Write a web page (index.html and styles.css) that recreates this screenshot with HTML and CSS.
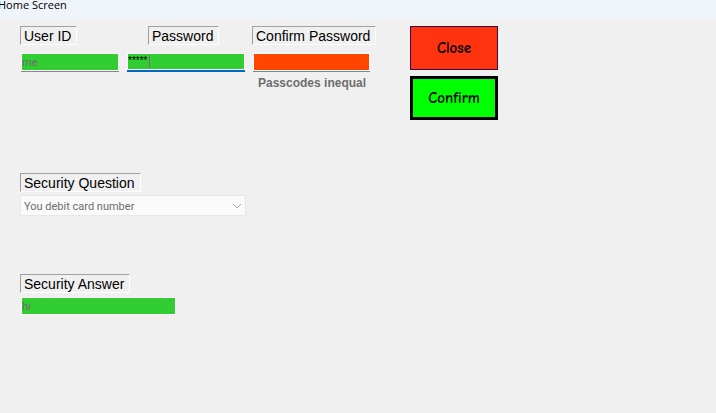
FILE: index.html
```html
<!DOCTYPE html>
<html lang="en">
<head>
<meta charset="utf-8">
<title>Home Screen</title>
<link rel="stylesheet" href="styles.css">
</head>
<body>
<header class="titlebar"><h1 class="title">Home Screen</h1></header>
<form class="form">
  <div class="top">
    <div class="field user">
      <label class="caption" for="user">User ID</label>
      <input class="entry" id="user" type="text" value="me" disabled>
    </div>
    <div class="field pass">
      <label class="caption" for="pass">Password</label>
      <div class="focus-wrap">
        <input class="entry active" id="pass" type="text" autocomplete="off" value="*****">
        <span class="caret"></span>
      </div>
    </div>
    <div class="field again">
      <label class="caption" for="again">Confirm Password</label>
      <input class="entry invalid" id="again" type="password" aria-describedby="message" disabled>
      <p class="message" id="message">Passcodes inequal</p>
    </div>
    <div class="actions">
      <button class="button close" type="button">Close</button>
      <button class="button confirm" type="submit">Confirm</button>
    </div>
  </div>
  <div class="field question">
    <label class="caption" for="question">Security Question</label>
    <div class="select-wrap">
      <select class="select" id="question" disabled>
        <option>You debit card number</option>
      </select>
      <svg class="chevron" viewBox="0 0 10 6" aria-hidden="true"><path d="M1 1l4 4 4-4"/></svg>
    </div>
  </div>
  <div class="field answer">
    <label class="caption" for="answer">Security Answer</label>
    <input class="entry plain" id="answer" type="text" value="hi" disabled>
  </div>
</form>
</body>
</html>
```
FILE: styles.css
```css
* { box-sizing: border-box; }

body {
  margin: 0;
  min-height: 100vh;
  background: #f0f0f0;
  color: #000;
  font-family: Arial, "Liberation Sans", sans-serif;
}

.titlebar {
  height: 19px;
  background: #eef4f9;
}

.title {
  margin: 0 0 0 -2px;
  font: 400 11px/10px "Segoe UI", "Open Sans", sans-serif;
}

.form { padding: 7px 20px; }

.top {
  display: flex;
  align-items: flex-start;
  gap: 6px;
  min-height: 147px;
}

.field {
  display: flex;
  flex-direction: column;
  align-items: flex-start;
}

.user { width: 100px; }
.pass { width: 120px; }
.again { width: 124px; }

.caption {
  height: 19px;
  padding: 1px 5px 0 3px;
  border: 1px solid;
  border-color: #a0a0a0 #fff #fff #a0a0a0;
  font-size: 14px;
  line-height: 17px;
  white-space: nowrap;
}

.pass .caption { margin-left: 22px; }

.entry {
  width: 98px;
  height: 18px;
  margin: 8px 0 0 1px;
  padding: 0;
  border: 1px solid #fff;
  border-radius: 0;
  outline: 0;
  background: #32cd32;
  box-shadow: 0 1px #868686;
  color: #6d6d6d;
  font: 11px/16px Roboto, sans-serif;
}

.focus-wrap {
  position: relative;
  width: 118px;
  margin-left: 1px;
}

.active {
  display: block;
  width: 100%;
  height: 17px;
  margin-left: 0;
  padding-bottom: 3px;
  box-shadow: 0 2px #0067c0;
  color: #000;
  font: 10px/12px "Liberation Sans", sans-serif;
}

.caret {
  position: absolute;
  top: 10px;
  left: 22px;
  width: 1px;
  height: 13px;
  background: #7d667d;
}

.invalid { width: 117px; background: #ff4500; }

.message {
  margin: 5px 0 0;
  padding-left: 6px;
  color: #6d6d6d;
  font: 700 12px/15px "Liberation Sans", sans-serif;
  white-space: nowrap;
}

.actions {
  display: grid;
  gap: 6px;
  width: 88px;
  margin-left: 28px;
}

.button {
  height: 44px;
  padding: 0;
  border: 1px solid #3a0a4a;
  border-radius: 0;
  color: #000;
  font: 900 15px/18px "Comic Sans MS", "Comic Neue", Lato, cursive;
}

.close { background: #ff330d; }

.confirm {
  border: 3px solid #000;
  background: #0f0;
}

.select-wrap {
  position: relative;
  width: 226px;
  margin-top: 3px;
}

.select {
  display: block;
  width: 100%;
  height: 21px;
  padding: 1px 20px 0 3px;
  border: 1px solid #e8e8e8;
  border-radius: 0;
  appearance: none;
  background: #fafafa;
  color: #6d6d6d;
  opacity: 1;
  font: 11px/19px Roboto, sans-serif;
}

.chevron {
  position: absolute;
  top: 8px;
  right: 4px;
  width: 10px;
  height: 6px;
  fill: none;
  stroke: #a8a8a8;
}

.answer { margin-top: 58px; }

.plain {
  width: 155px;
  margin-top: 4px;
  box-shadow: none;
}
```
